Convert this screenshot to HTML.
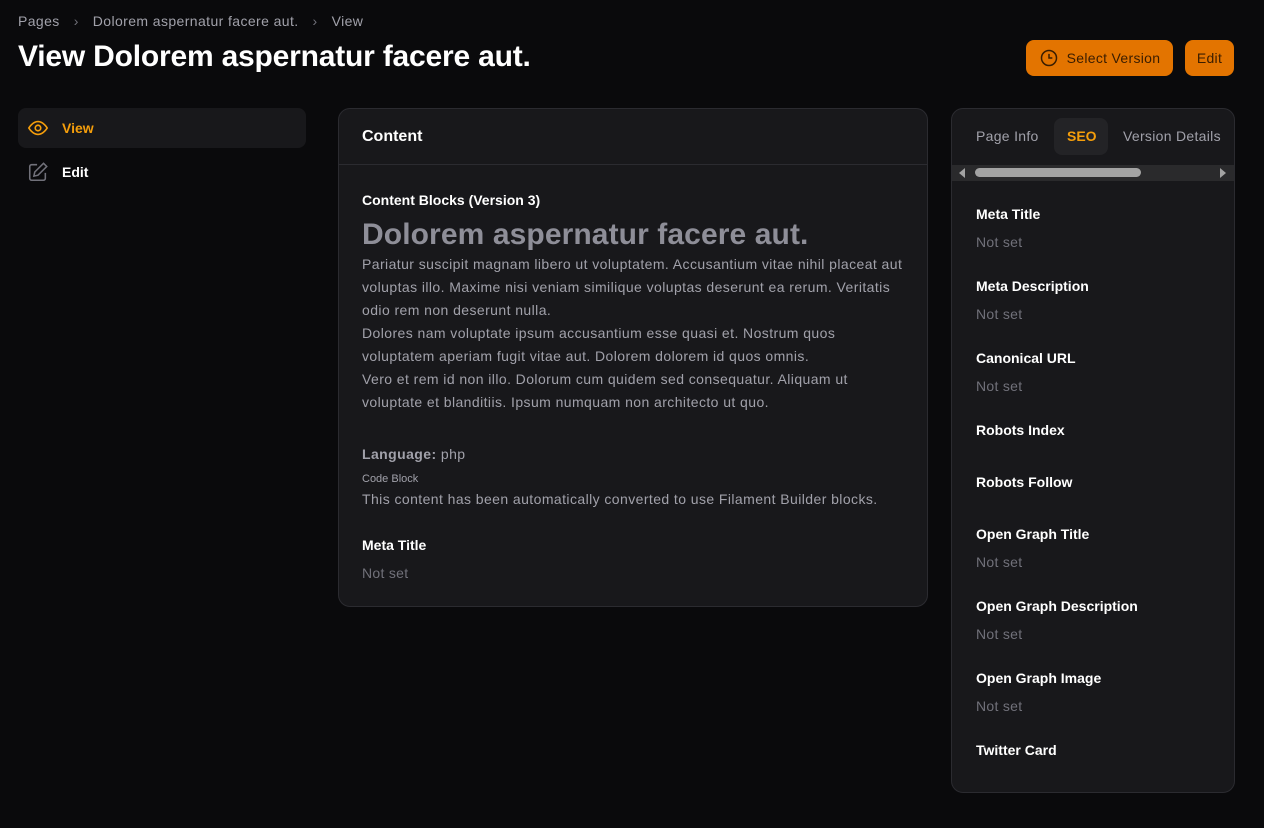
<!DOCTYPE html>
<html><head><meta charset="utf-8"><style>
*{box-sizing:border-box;margin:0;padding:0}
body{width:1264px;height:828px;background:#0a0a0c;font-family:"Liberation Sans",sans-serif;color:#fff;position:relative;overflow:hidden}
.a{position:absolute;white-space:nowrap}
.bc{font-size:14px;color:#a1a1aa;top:13px;left:18px;letter-spacing:0.4px}
.bc span{margin:0 14px;color:#71717a}
h1{position:absolute;left:18px;top:40px;font-size:30px;font-weight:bold;letter-spacing:-0.2px}
.btn{position:absolute;top:40px;height:36px;background:#e37400;border-radius:8px;color:#3a1d00;font-size:14px;display:flex;align-items:center;justify-content:center;letter-spacing:0.3px}
.card{position:absolute;background:#18181b;border:1px solid #2b2b30;border-radius:12px}
.lbl{font-size:14px;font-weight:bold;color:#fff}
.ns{font-size:14px;color:#71717a;letter-spacing:0.3px}
.p{font-size:14px;color:#a1a1aa;line-height:23px;letter-spacing:0.42px}
</style></head><body>
<div class="a bc">Pages<span>›</span>Dolorem aspernatur facere aut.<span>›</span>View</div>
<h1>View Dolorem aspernatur facere aut.</h1>
<div class="btn" style="left:1026px;width:147px"><svg width="20" height="20" viewBox="0 0 24 24" fill="none" stroke="#3a1d00" stroke-width="1.8" style="margin-right:8px"><circle cx="12" cy="12" r="9"/><path d="M12 7v5h4"/></svg>Select Version</div>
<div class="btn" style="left:1185px;width:49px">Edit</div>

<div class="a" style="left:18px;top:108px;width:288px;height:40px;background:#18181b;border-radius:8px"></div>
<svg class="a" style="left:26px;top:117px" width="24" height="22" viewBox="0 0 24 24" fill="none" stroke="#f59e0b" stroke-width="1.8"><path d="M2 12s4-7 10-7 10 7 10 7-4 7-10 7S2 12 2 12z"/><circle cx="12" cy="12" r="3"/></svg>
<div class="a" style="left:62px;top:120px;font-size:14px;font-weight:bold;color:#f59e0b">View</div>
<svg class="a" style="left:27px;top:161px" width="22" height="22" viewBox="0 0 24 24" fill="none" stroke="#71717a" stroke-width="1.7"><path d="M11 4H5a2 2 0 0 0-2 2v13a2 2 0 0 0 2 2h13a2 2 0 0 0 2-2v-6"/><path d="M18 2.5l3.5 3.5L12 15.5l-4.5 1 1-4.5z"/></svg>
<div class="a" style="left:62px;top:164px;font-size:14px;font-weight:bold">Edit</div>

<div class="card" style="left:338px;top:108px;width:590px;height:499px">
<div class="a" style="left:23px;top:19px;font-size:16px;font-weight:bold">Content</div>
<div class="a" style="left:0;top:55px;width:588px;border-top:1px solid #2b2b30"></div>
<div class="a lbl" style="left:23px;top:83px">Content Blocks (Version 3)</div>
<div class="a" style="left:23px;top:109px;font-size:30px;font-weight:bold;color:#8e8e98;letter-spacing:0.1px">Dolorem aspernatur facere aut.</div>
<div class="a p" style="left:23px;top:144px;width:548px;white-space:normal">Pariatur suscipit magnam libero ut voluptatem. Accusantium vitae nihil placeat aut voluptas illo. Maxime nisi veniam similique voluptas deserunt ea rerum. Veritatis odio rem non deserunt nulla.<br>Dolores nam voluptate ipsum accusantium esse quasi et. Nostrum quos voluptatem aperiam fugit vitae aut. Dolorem dolorem id quos omnis.<br>Vero et rem id non illo. Dolorum cum quidem sed consequatur. Aliquam ut voluptate et blanditiis. Ipsum numquam non architecto ut quo.</div>
<div class="a p" style="left:23px;top:334px"><b>Language:</b> php</div>
<div class="a" style="left:23px;top:364px;font-size:11px;color:#a1a1aa">Code Block</div>
<div class="a p" style="left:23px;top:379px">This content has been automatically converted to use Filament Builder blocks.</div>
<div class="a lbl" style="left:23px;top:428px">Meta Title</div>
<div class="a ns" style="left:23px;top:456px">Not set</div>
</div>

<div class="card" style="left:951px;top:108px;width:284px;height:685px;overflow:hidden">
<div class="a" style="left:102px;top:9px;width:54px;height:37px;background:#232326;border-radius:8px"></div>
<div class="a" style="left:24px;top:19px;font-size:14px;color:#a1a1aa;letter-spacing:0.3px">Page Info</div>
<div class="a" style="left:115px;top:19px;font-size:14px;font-weight:bold;color:#f59e0b">SEO</div>
<div class="a" style="left:171px;top:19px;font-size:14px;color:#a1a1aa;letter-spacing:0.3px">Version Details</div>
<div class="a" style="left:0;top:56px;width:284px;height:16px;background:#2a2a2c"></div>
<div class="a" style="left:23px;top:59px;width:166px;height:9px;background:#a3a3a3;border-radius:5px"></div>
<div class="a" style="left:7px;top:59px;width:0;height:0;border:5px solid transparent;border-right:6px solid #a3a3a3;border-left:0"></div>
<div class="a" style="left:268px;top:59px;width:0;height:0;border:5px solid transparent;border-left:6px solid #a3a3a3;border-right:0"></div>
<div class="a lbl" style="left:24px;top:97px">Meta Title</div><div class="a ns" style="left:24px;top:125px">Not set</div>
<div class="a lbl" style="left:24px;top:169px">Meta Description</div><div class="a ns" style="left:24px;top:197px">Not set</div>
<div class="a lbl" style="left:24px;top:241px">Canonical URL</div><div class="a ns" style="left:24px;top:269px">Not set</div>
<div class="a lbl" style="left:24px;top:313px">Robots Index</div>
<div class="a lbl" style="left:24px;top:365px">Robots Follow</div>
<div class="a lbl" style="left:24px;top:417px">Open Graph Title</div><div class="a ns" style="left:24px;top:445px">Not set</div>
<div class="a lbl" style="left:24px;top:489px">Open Graph Description</div><div class="a ns" style="left:24px;top:517px">Not set</div>
<div class="a lbl" style="left:24px;top:561px">Open Graph Image</div><div class="a ns" style="left:24px;top:589px">Not set</div>
<div class="a lbl" style="left:24px;top:633px">Twitter Card</div>
</div>
</body></html>
